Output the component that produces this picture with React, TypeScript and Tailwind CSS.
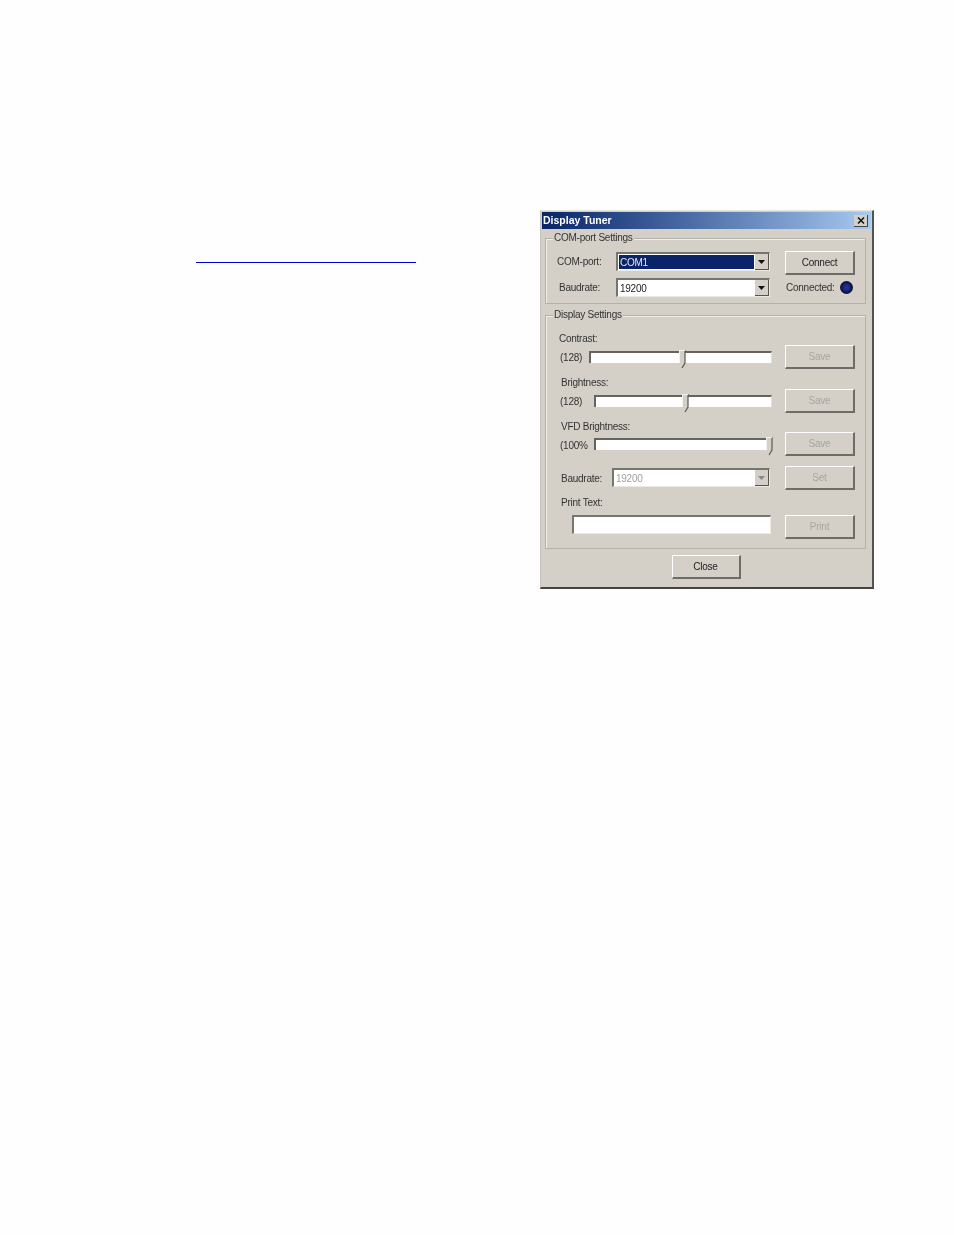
const font = { fontFamily: '"Liberation Sans", Arial, sans-serif' }

function Btn({ label, disabled, className = '' }: { label: string; disabled?: boolean; className?: string }) {
  return (
    <div
      className={`flex items-center justify-center w-[70px] h-[24px] bg-[#d4d0c8] border-t border-l border-t-white border-l-white border-r-2 border-b-2 border-r-[#6e6c68] border-b-[#6e6c68] text-[10px] tracking-[-0.25px] ${
        disabled ? 'text-[#a8a6a0]' : 'text-[#222]'
      } ${className}`}
    >
      {label}
    </div>
  )
}

function Combo({ value, selected, disabled, className = '' }: { value: string; selected?: boolean; disabled?: boolean; className?: string }) {
  return (
    <div className={`flex h-[19px] bg-white border-t-2 border-l-2 border-t-[#77756f] border-l-[#77756f] border-r border-b border-r-[#ece9e2] border-b-[#ece9e2] ${className}`}>
      <div className="flex-1 flex p-px min-w-0">
        <div
          className={`flex-1 flex items-center pl-[1px] text-[10px] tracking-[-0.25px] ${
            selected ? 'bg-[#0a246a] text-[#e8e8f0]' : disabled ? 'text-[#a0a0a0]' : 'text-[#222]'
          }`}
        >
          {value}
        </div>
      </div>
      <div className="flex items-center justify-center w-[14px] bg-[#d4d0c8] border-r border-b border-r-[#55534f] border-b-[#55534f]">
        <svg width="7" height="4" viewBox="0 0 7 4">
          <path d="M0 0h7L3.5 4z" fill={disabled ? '#8a8884' : '#111'} />
        </svg>
      </div>
    </div>
  )
}

function Slider({ thumb, className = '' }: { thumb: number; className?: string }) {
  return (
    <div className={`relative h-[12px] bg-white border-t-2 border-l-2 border-t-[#66645f] border-l-[#66645f] border-r border-r-[#e4e1da] ${className}`}>
      <svg className="absolute -top-[4px]" style={{ left: thumb }} width="7" height="20" viewBox="0 0 7 20">
        <path d="M0 1h6v13l-3 5-3-4z" fill="#d4d0c8" />
        <path d="M6 1v13l-3 5" fill="none" stroke="#5a5853" strokeWidth="1.2" />
        <path d="M0.5 14V1.5H6" fill="none" stroke="#f4f3ef" />
      </svg>
    </div>
  )
}

function Group({ title, className = '', children }: { title: string; className?: string; children: React.ReactNode }) {
  return (
    <div className={`relative mx-[4px] w-[321px] border border-[#b4b1aa] shadow-[inset_1px_1px_0_#efede8] ${className}`}>
      <span className="absolute -top-[7px] left-[7px] bg-[#d4d0c8] px-px text-[10px] tracking-[-0.25px] leading-[12px] text-[#333]">{title}</span>
      {children}
    </div>
  )
}

export default function App() {
  return (
    <div className="min-h-[1235px] bg-[#fefefe] pt-[210px] flex" style={font}>
      {/* link underline from the page text */}
      <div className="w-[540px] pl-[196px] pt-[52px]">
        <div className="w-[220px] h-px bg-[#0000d8]" />
      </div>

      <div className="w-[334px] h-[379px] bg-[#d4d0c8] border-t border-l border-t-[#e6e3dd] border-l-[#c8c5be] border-r-2 border-b-2 border-r-[#55534f] border-b-[#45433f] blur-[0.55px]">
        {/* title bar */}
        <div className="flex items-center justify-between mx-[1px] mt-[1px] h-[17px] pl-[1px] pr-[3px] bg-gradient-to-r from-[#0a246a] to-[#a6caf0]">
          <span className="text-[10.5px] font-bold text-white">Display Tuner</span>
          <div className="flex items-center justify-center w-[14px] h-[12px] bg-[#d4d0c8] border-r border-b border-r-[#444] border-b-[#444] text-[#111]">
            <svg width="8" height="7" viewBox="0 0 8 7">
              <path d="M1 0.5l6 6M7 0.5l-6 6" stroke="#111" strokeWidth="1.5" />
            </svg>
          </div>
        </div>

        <Group title="COM-port Settings" className="mt-[9px] h-[66px] pt-[12px]">
          <div className="flex h-[24px] text-[10px] tracking-[-0.25px] text-[#333]">
            <div className="w-[70px] pl-[11px] pt-[3px]">COM-port:</div>
            <Combo value="COM1" selected className="w-[154px] mt-px" />
            <Btn label="Connect" className="ml-[15px]" />
          </div>
          <div className="flex items-center h-[19px] mt-[3px] text-[10px] tracking-[-0.25px] text-[#333]">
            <div className="w-[70px] pl-[13px]">Baudrate:</div>
            <Combo value="19200" className="w-[154px]" />
            <div className="ml-[16px] w-[50px]">Connected:</div>
            <div className="ml-[4px] w-[13px] h-[13px] rounded-full bg-[radial-gradient(circle,#1d2f9a_20%,#0c1030_65%,#222_100%)]" />
          </div>
        </Group>

        <Group title="Display Settings" className="mt-[11px] h-[234px] pt-[17px] text-[10px] tracking-[-0.25px] text-[#333]">
          <div className="h-[12px] leading-[12px] pl-[13px]">Contrast:</div>
          <div className="flex items-center h-[23px]">
            <div className="w-[43px] pl-[14px] pt-[2px]">(128)</div>
            <Slider thumb={88} className="w-[183px]" />
            <Btn label="Save" disabled className="ml-[13px]" />
          </div>

          <div className="h-[12px] leading-[12px] pl-[15px] mt-[9px]">Brightness:</div>
          <div className="flex items-center h-[23px]">
            <div className="w-[48px] pl-[14px] pt-[2px]">(128)</div>
            <Slider thumb={86} className="w-[178px]" />
            <Btn label="Save" disabled className="ml-[13px]" />
          </div>

          <div className="h-[12px] leading-[12px] pl-[15px] mt-[9px]">VFD Brightness:</div>
          <div className="flex items-center h-[23px] -mt-px">
            <div className="w-[48px] pl-[14px] pt-[3px]">(100%</div>
            <Slider thumb={170} className="w-[178px]" />
            <Btn label="Save" disabled className="ml-[13px]" />
          </div>

          <div className="flex items-center h-[23px] mt-[11px]">
            <div className="w-[66px] pl-[15px] pt-px">Baudrate:</div>
            <Combo value="19200" disabled className="w-[158px]" />
            <Btn label="Set" disabled className="ml-[15px]" />
          </div>

          <div className="h-[12px] leading-[12px] pl-[15px] mt-[8px]">Print Text:</div>
          <div className="flex h-[23px] mt-[6px]">
            <div className="w-[26px]" />
            <div className="w-[199px] h-[19px] bg-white border-t-2 border-l-2 border-t-[#77756f] border-l-[#77756f] border-r border-b border-r-[#ece9e2] border-b-[#ece9e2]" />
            <Btn label="Print" disabled className="ml-[14px]" />
          </div>
        </Group>

        <div className="flex justify-center mt-[6px] pr-[1px]">
          <Btn label="Close" className="w-[69px]!" />
        </div>
      </div>
    </div>
  )
}
